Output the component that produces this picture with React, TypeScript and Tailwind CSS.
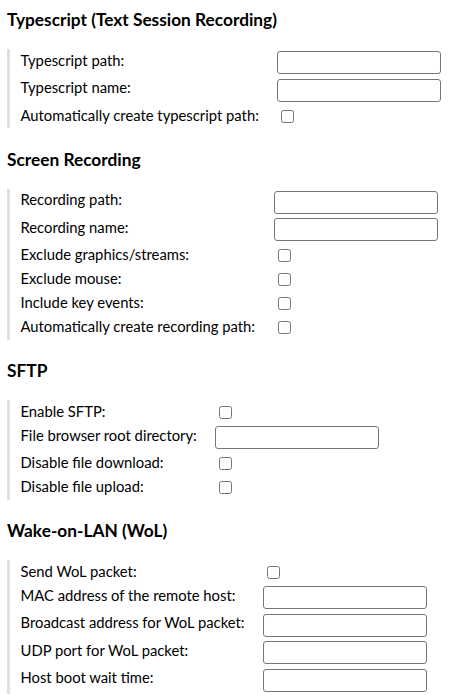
type Field = { label: string; kind: 'text' | 'check' };

type Section = { title: string; fields: Field[] };

const sections: Section[] = [
  {
    title: 'Typescript (Text Session Recording)',
    fields: [
      { label: 'Typescript path:', kind: 'text' },
      { label: 'Typescript name:', kind: 'text' },
      { label: 'Automatically create typescript path:', kind: 'check' },
    ],
  },
  {
    title: 'Screen Recording',
    fields: [
      { label: 'Recording path:', kind: 'text' },
      { label: 'Recording name:', kind: 'text' },
      { label: 'Exclude graphics/streams:', kind: 'check' },
      { label: 'Exclude mouse:', kind: 'check' },
      { label: 'Include key events:', kind: 'check' },
      { label: 'Automatically create recording path:', kind: 'check' },
    ],
  },
  {
    title: 'SFTP',
    fields: [
      { label: 'Enable SFTP:', kind: 'check' },
      { label: 'File browser root directory:', kind: 'text' },
      { label: 'Disable file download:', kind: 'check' },
      { label: 'Disable file upload:', kind: 'check' },
    ],
  },
  {
    title: 'Wake-on-LAN (WoL)',
    fields: [
      { label: 'Send WoL packet:', kind: 'check' },
      { label: 'MAC address of the remote host:', kind: 'text' },
      { label: 'Broadcast address for WoL packet:', kind: 'text' },
      { label: 'UDP port for WoL packet:', kind: 'text' },
      { label: 'Host boot wait time:', kind: 'text' },
    ],
  },
];

function FieldRow({ field }: { field: Field }) {
  const isText = field.kind === 'text';
  return (
    <tr className={isText ? 'h-[27.5px]' : 'h-[24px]'}>
      <td className="p-0 pr-[18.5px] pt-[2.5px] align-top whitespace-nowrap text-[14.8px] leading-[17px]">
        {field.label}
      </td>
      <td className="p-0 align-middle">
        {isText ? (
          <input
            type="text"
            className="block w-[164px] h-[23px] border border-[#767676] rounded-[3px] bg-white px-1 text-[14px] outline-none"
          />
        ) : (
          <input type="checkbox" className="block w-[13px] h-[13px] my-[3px] ml-[4px] mr-[3px]" />
        )}
      </td>
    </tr>
  );
}

export default function App() {
  return (
    <div className="min-h-screen bg-white text-black pl-[7px] pt-[10px] font-['Lato',sans-serif]">
      {sections.map((section, i) => (
        <div key={section.title} className={i === 0 ? '' : 'mt-[21.5px]'}>
          <h2 className="text-[17.3px] font-bold leading-[20px] mb-[19px]">{section.title}</h2>
          <div className="border-l-[3px] border-[#dfdfdf] pl-[10.5px]">
            <table className="border-collapse">
              <tbody>
                {section.fields.map((f) => (
                  <FieldRow key={f.label} field={f} />
                ))}
              </tbody>
            </table>
          </div>
        </div>
      ))}
    </div>
  );
}
